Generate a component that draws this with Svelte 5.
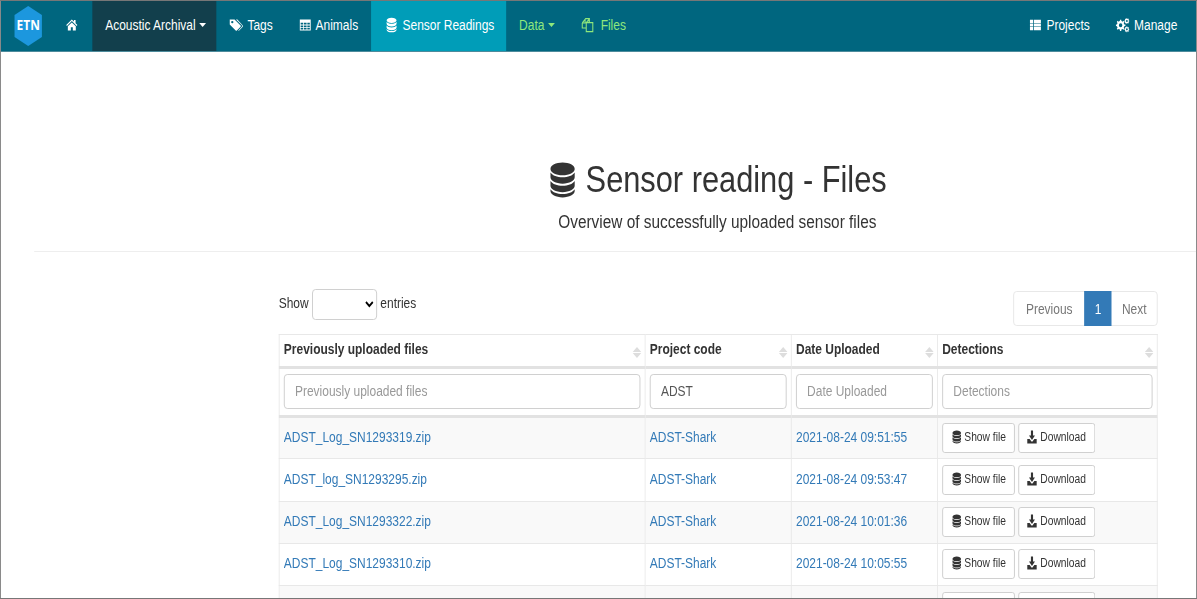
<script>
  const db = "M12 1C6.500 1 2 2.800 2 5s4.500 4 10 4 10-1.800 10-4-4.500-4-10-4zM2 7.200v3.100c0 2.200 4.500 4 10 4s10-1.800 10-4V7.200c-1.700 2-5.600 3-10 3s-8.300-1-10-3zM2 12.600v3.100c0 2.200 4.500 4 10 4s10-1.800 10-4v-3.100c-1.700 2-5.600 3-10 3s-8.300-1-10-3zM2 17.900V19c0 2.200 4.500 4 10 4s10-1.800 10-4v-1.100c-1.700 2-5.600 3-10 3s-8.300-1-10-3z";
  const home = "M12 2.500 .8 12l1.400 1.600L12 5.300l9.800 8.300 1.400-1.600L19.500 8.900V3.500h-3.200v2.700zM12 7.500 4 14.200V21.500h6v-5.500h4v5.500h6v-7.300z";
  const tags = "M1 2.500h8.500L20 13a1.500 1.500 0 0 1 0 2.100l-6.400 6.400a1.500 1.500 0 0 1-2.100 0L1 11zM5.500 5a2 2 0 1 0 0 4 2 2 0 0 0 0-4zM12 2.500h2.500L24 13a1.500 1.500 0 0 1 0 2.100l-6.400 6.400a1.500 1.500 0 0 1-1.900.2l6.200-6.300a2.500 2.500 0 0 0 0-3.400z";
  const table = "M1 2.500h22v19H1zM2.800 8v3.200h5V8zM9.300 8v3.200h5.400V8zM16.200 8v3.200h5V8zM2.800 12.700v3h5v-3zM9.300 12.700v3h5.400v-3zM16.200 12.700v3h5v-3zM2.800 17.200v2.500h5v-2.500zM9.300 17.200v2.500h5.400v-2.500zM16.200 17.200v2.500h5v-2.500z";
  const list = "M1 3h6.500v5.500H1zM9 3h14v5.500H9zM1 9.500h6.500v5H1zM9 9.500h14v5H9zM1 15.500h6.500V21H1zM9 15.500h14V21H9z";
  const download = "M9.500 1h5v8.500h4.500L12 17 5 9.500h4.500zM1 15.500h5.500L10 19a2.800 2.800 0 0 0 4 0l3.500-3.500H23V23H1z";

  // gear outline with a round hole in the middle
  function gear(cx, cy, r, teeth) {
    let d = "";
    const step = (Math.PI * 2) / teeth;
    for (let i = 0; i < teeth; i++) {
      const a = i * step;
      const pts = [
        [r * 0.76, a - step * 0.5],
        [r * 0.76, a - step * 0.26],
        [r, a - step * 0.17],
        [r, a + step * 0.17],
        [r * 0.76, a + step * 0.26]
      ];
      for (const [l, t] of pts) {
        d += (d ? "L" : "M") + (cx + l * Math.cos(t)).toFixed(2) + " " + (cy + l * Math.sin(t)).toFixed(2);
      }
    }
    const h = r * 0.36;
    return d + `zM${cx - h} ${cy}a${h} ${h} 0 1 0 ${h * 2} 0a${h} ${h} 0 1 0 ${-h * 2} 0z`;
  }
  const cogs = gear(8.5, 12.5, 8.5, 8) + gear(19.5, 6, 4.5, 8) + gear(19.5, 18.5, 4.5, 8);

  const rows = [
    { file: "ADST_Log_SN1293319.zip", project: "ADST-Shark", date: "2021-08-24 09:51:55" },
    { file: "ADST_log_SN1293295.zip", project: "ADST-Shark", date: "2021-08-24 09:53:47" },
    { file: "ADST_Log_SN1293322.zip", project: "ADST-Shark", date: "2021-08-24 10:01:36" },
    { file: "ADST_Log_SN1293310.zip", project: "ADST-Shark", date: "2021-08-24 10:05:55" },
    { file: "", project: "", date: "" }
  ];

  const columns = ["Previously uploaded files", "Project code", "Date Uploaded", "Detections"];
</script>

{#snippet icon(d, cls)}
  <svg class="icon {cls}" viewBox="0 0 24 24" preserveAspectRatio="none" aria-hidden="true"><path fill-rule="evenodd" {d} /></svg>
{/snippet}

<div class="frame">
  <nav class="navbar">
    <svg class="logo" viewBox="0 0 34 40" aria-label="ETN">
      <polygon points="17,0 33,9 33,31 17,40 1,31 1,9" fill="#1c97de" />
      <text x="17" y="24.500" text-anchor="middle">ETN</text>
    </svg>
    <a class="item" href="#home">{@render icon(home, "")}</a>
    <a class="item dark" href="#acoustic">Acoustic Archival <span class="caret"></span></a>
    <a class="item" href="#tags">{@render icon(tags, "wide")} Tags</a>
    <a class="item shifted" href="#animals">{@render icon(table, "")} Animals</a>
    <a class="item current" href="#sensors">{@render icon(db, "tall")} Sensor Readings</a>
    <a class="item green" href="#data">Data <span class="caret"></span></a>
    <a class="item green" href="#files"><svg class="icon wide tall" viewBox="0 0 24 24" preserveAspectRatio="none" aria-hidden="true"><path class="outline" d="M3 9 9 2.500h6.500V8M3 9v7.500h7M3 9h5V3M10 8.500 15.500 3M10 8.500h11.500V22H10zM15 8.500V3" /></svg> Files</a>
    <div class="right">
      <a class="item" href="#projects">{@render icon(list, "")} Projects</a>
      <a class="item" href="#manage">{@render icon(cogs, "wide tall")} Manage</a>
    </div>
  </nav>

  <div class="heading">
    <div class="title">
      <h1>{@render icon(db, "big")} Sensor reading - Files</h1>
      <p>Overview of successfully uploaded sensor files</p>
    </div>
  </div>

  <div class="inner">
    <div class="tools">
      <label class="length">Show <select></select> entries</label>
      <div class="pager">
        <a class="prev" href="#prev">Previous</a>
        <a class="on" href="#one">1</a>
        <a href="#next">Next</a>
      </div>
    </div>

    <table>
      <colgroup>
        <col class="wide-col" />
        <col class="mid-col" />
        <col class="mid-col" />
        <col />
      </colgroup>
      <thead>
        <tr>
          {#each columns as name}
            <th>{name}<span class="sort"><i></i><i></i></span></th>
          {/each}
        </tr>
        <tr class="filters">
          <td><input placeholder="Previously uploaded files" /></td>
          <td><input value="ADST" /></td>
          <td><input placeholder="Date Uploaded" /></td>
          <td><input placeholder="Detections" /></td>
        </tr>
      </thead>
      <tbody>
        {#each rows as row}
          <tr>
            <td><a href="#file">{row.file}</a></td>
            <td><a href="#project">{row.project}</a></td>
            <td><a href="#date">{row.date}</a></td>
            <td class="actions">
              <button>{@render icon(db, "small")} Show file</button>
              <button>{@render icon(download, "small")} Download</button>
            </td>
          </tr>
        {/each}
      </tbody>
    </table>
  </div>
</div>

<style>
  :global(body) {
    margin: 0;
    background: #fff;
    overflow: hidden;
  }

  /* the reference is a wide page squeezed into a narrower shot */
  .frame {
    box-sizing: border-box;
    width: 1400px;
    height: 599px;
    overflow: hidden;
    border: 1px solid #777;
    font: 14px/20px "Liberation Sans", Arial, sans-serif;
    color: #333;
    transform: scaleX(0.855);
    transform-origin: 0 0;
  }

  .icon {
    display: inline-block;
    width: 14px;
    height: 14px;
    fill: currentColor;
    vertical-align: -2px;
  }

  .wide {
    width: 16px;
  }

  .tall {
    height: 16px;
  }

  .navbar {
    display: flex;
    align-items: stretch;
    height: 50px;
    background: #00667f;
    border-bottom: 1px solid #4d8b9c;
  }

  .logo {
    flex: none;
    width: 34px;
    height: 40px;
    margin: 5px 12px 0 15px;
  }

  .logo text {
    font: bold 14px "Open Sans", sans-serif;
    fill: #fff;
  }

  .item {
    display: flex;
    align-items: center;
    padding: 0 15px 2px;
    color: #fff;
    text-decoration: none;
    white-space: pre;
  }

  .item .icon {
    flex: none;
    margin-right: 2px;
  }

  .shifted {
    padding-left: 16px;
  }

  .dark {
    background: #123f4c;
    padding-right: 12px;
  }

  .current {
    background: #009db8;
    padding-left: 17px;
    padding-right: 14px;
  }

  .green {
    color: #8fe87c;
  }

  .green .icon {
    margin-right: 4px;
  }

  .outline {
    fill: none;
    stroke: currentColor;
    stroke-width: 1.8;
  }

  .caret {
    display: inline-block;
    border-top: 4px solid currentColor;
    border-left: 4px solid transparent;
    border-right: 4px solid transparent;
  }

  .right {
    display: flex;
    margin-left: auto;
    padding-right: 7px;
  }

  .heading {
    margin: 108px 0 0 39px;
    padding-bottom: 19px;
    border-bottom: 1px solid #eee;
  }

  .title {
    margin: 0 47px 0 286px;
  }

  .inner {
    margin: 0 45px 0 325px;
  }

  h1 {
    margin: 0;
    text-align: center;
    font-size: 36px;
    font-weight: 400;
    line-height: 40px;
  }

  .big {
    width: 34px;
    height: 38px;
    vertical-align: -7px;
    fill: #333;
  }

  .heading p {
    margin: 12px 0 0;
    text-align: center;
    font-size: 18px;
    line-height: 20px;
  }

  .tools {
    display: flex;
    justify-content: space-between;
    align-items: flex-start;
    margin-top: 37px;
    height: 45px;
  }

  select {
    box-sizing: border-box;
    width: 76px;
    height: 31px;
    margin: 0;
    background: #fff;
    border: 1px solid #ccc;
    border-radius: 4px;
    vertical-align: middle;
  }

  .pager {
    display: flex;
    box-sizing: border-box;
    height: 35px;
    margin-top: 2px;
    border: 1px solid #e6e6e6;
    border-radius: 4px;
  }

  .pager a {
    padding: 7px 12px;
    color: #777;
    text-decoration: none;
  }

  .pager .prev {
    padding: 7px 14px 7px 13.5px;
  }

  .pager .on {
    margin: -1px 0;
    padding: 8px 12px;
    background: #337ab7;
    color: #fff;
  }

  table {
    width: 100%;
    table-layout: fixed;
    border-collapse: collapse;
    border: 1px solid #ddd;
  }

  .wide-col {
    width: 428px;
  }

  .mid-col {
    width: 171px;
  }

  th,
  td {
    box-sizing: border-box;
    padding: 0 5px 2px;
    border: 1px solid #e8e8e8;
    text-align: left;
  }

  th {
    position: relative;
    height: 33px;
    padding-bottom: 4px;
    font-weight: 700;
    border-bottom: 3px solid #e2e2e2;
  }

  .sort {
    position: absolute;
    right: 4px;
    top: 12px;
  }

  .sort i {
    display: block;
    margin-bottom: 1px;
    border-left: 5px solid transparent;
    border-right: 5px solid transparent;
    border-bottom: 5px solid #ddd;
  }

  .sort i + i {
    border-bottom: 0;
    border-top: 5px solid #ddd;
  }

  .filters td {
    height: 49px;
    border-bottom: 3px solid #e2e2e2;
  }

  input {
    box-sizing: border-box;
    display: block;
    width: 100%;
    height: 35px;
    padding: 6px 12px;
    font: inherit;
    color: #555;
    border: 1px solid #ccc;
    border-radius: 4px;
  }

  input::placeholder {
    color: #999;
  }

  tbody tr {
    height: 42.25px;
  }

  tbody tr:nth-child(odd) {
    background: #f9f9f9;
  }

  tbody a {
    color: #337ab7;
    text-decoration: none;
  }

  .actions {
    padding-bottom: 0;
    white-space: nowrap;
  }

  button {
    height: 30px;
    padding: 0 9.5px 2px;
    font: 12px/16px "Liberation Sans", Arial, sans-serif;
    color: #333;
    background: #fff;
    border: 1px solid #ccc;
    border-radius: 3px;
    vertical-align: middle;
  }

  .small {
    width: 12px;
    height: 14px;
    vertical-align: -3px;
  }
</style>
